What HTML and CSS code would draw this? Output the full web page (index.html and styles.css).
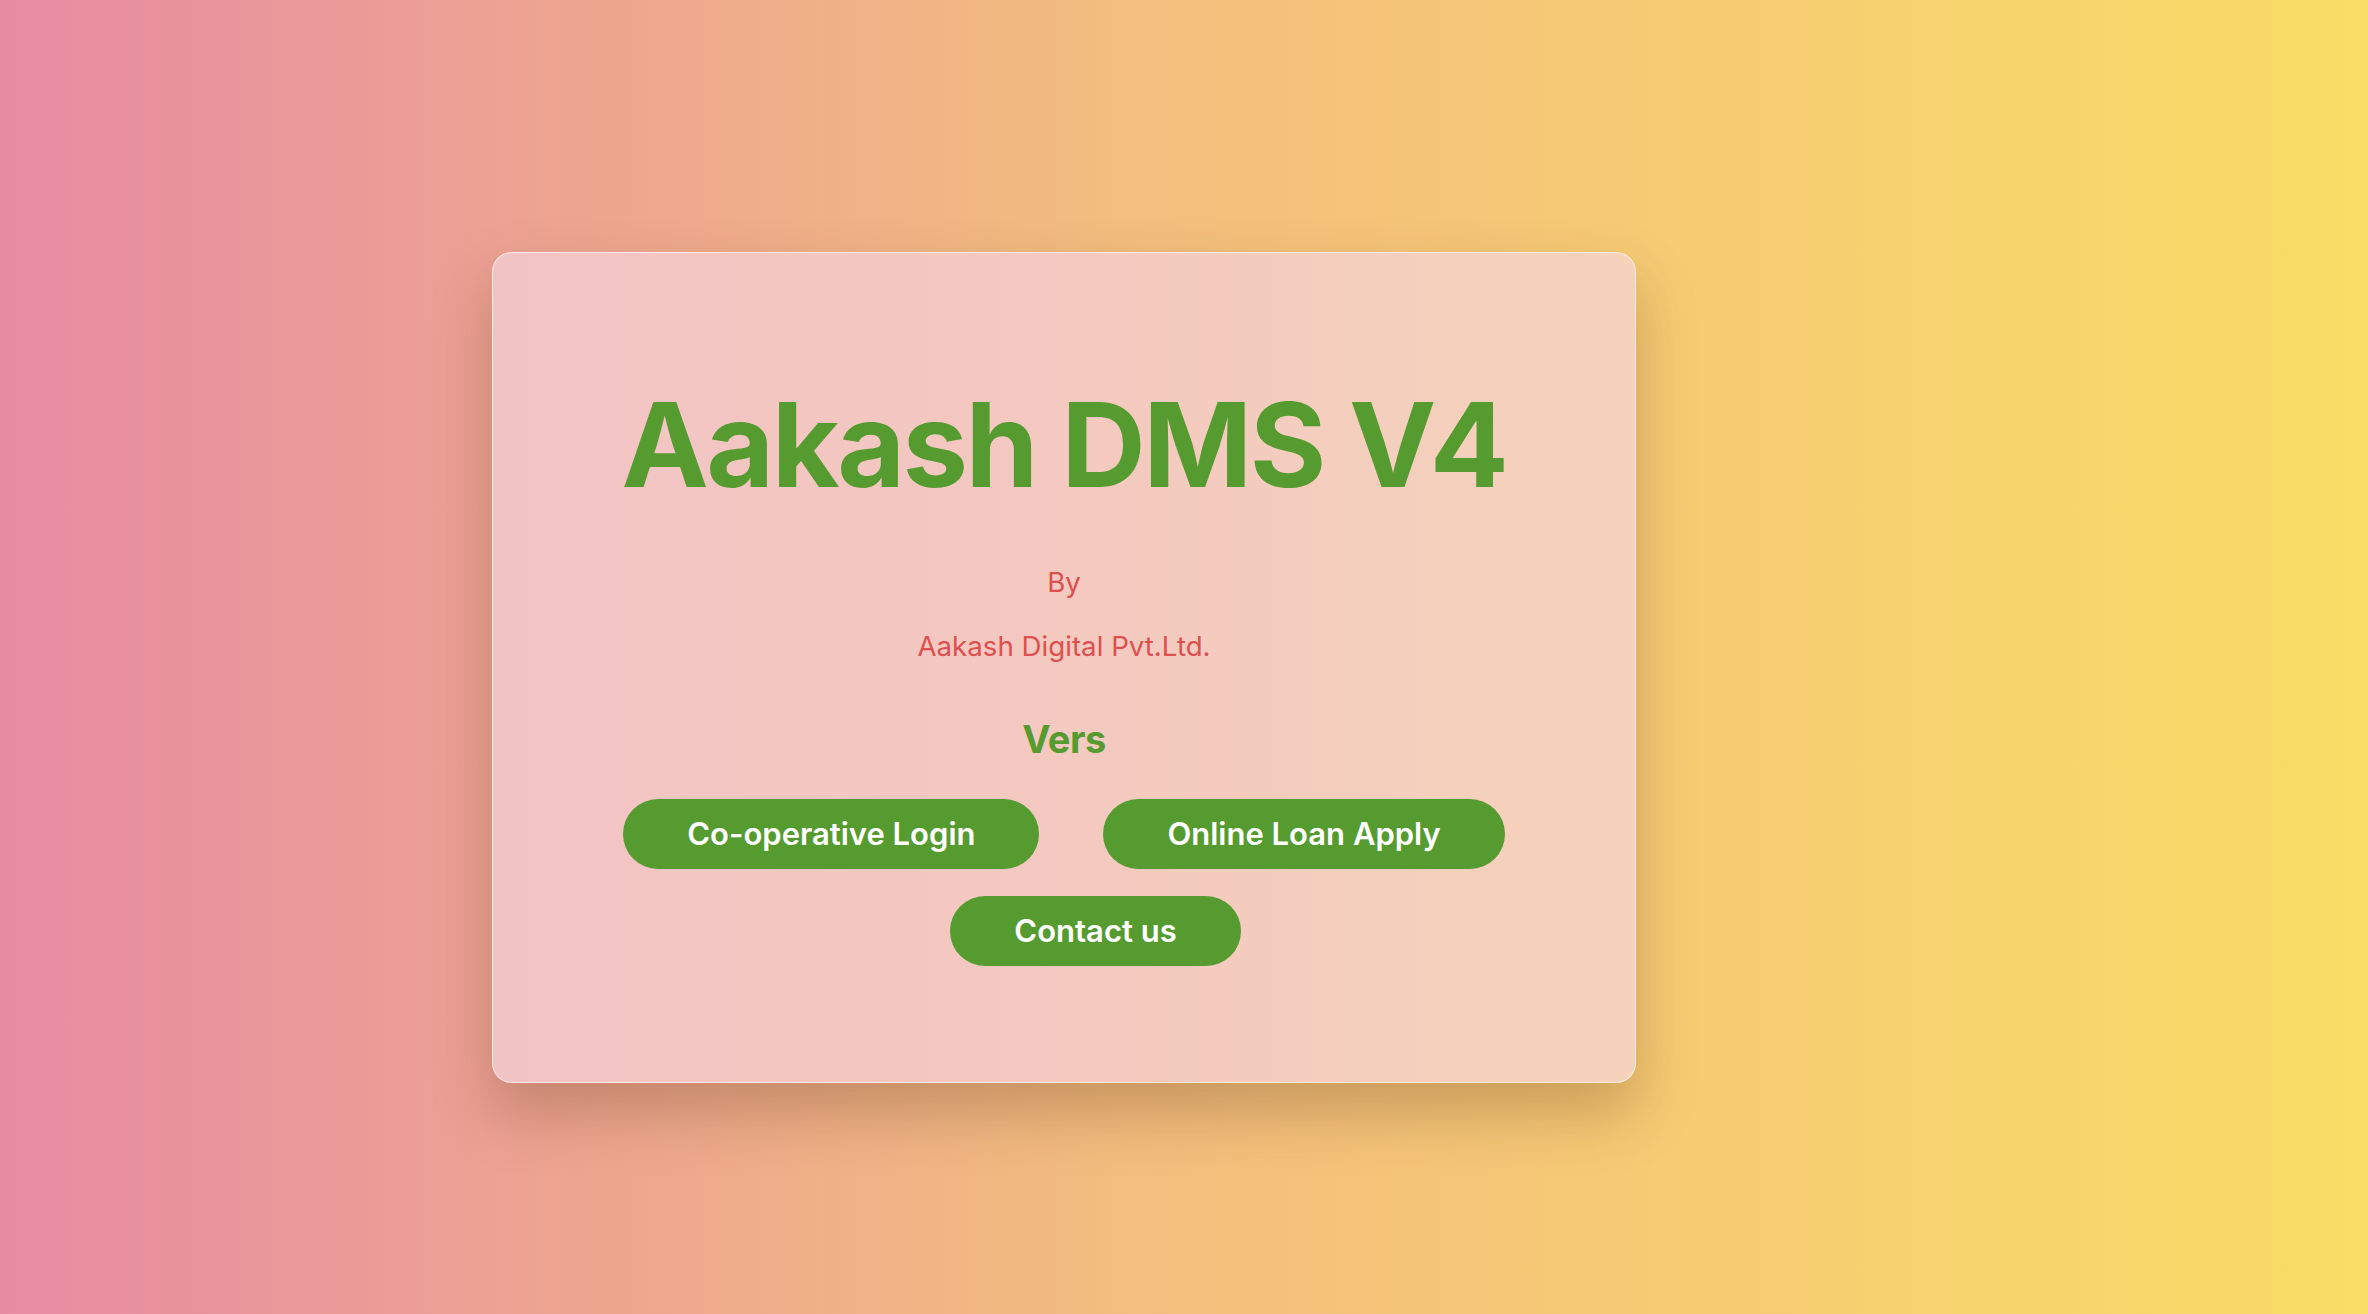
FILE: index.html
```html
<!DOCTYPE html>
<html lang="en">
<head>
<meta charset="utf-8">
<title>Aakash DMS V4</title>
<link rel="stylesheet" href="styles.css">
</head>
<body>
<main class="page">
  <section class="card">
    <h1 class="title">Aakash DMS V4</h1>
    <p class="by">By</p>
    <p class="company">Aakash Digital Pvt.Ltd.</p>
    <h2 class="version">Vers</h2>
    <div class="actions">
      <a class="btn" href="#">Co-operative Login</a>
      <a class="btn" href="#">Online Loan Apply</a>
    </div>
    <div class="actions actions-second">
      <a class="btn btn-contact" href="#">Contact us</a>
    </div>
  </section>
</main>
</body>
</html>
```
FILE: styles.css
```css
html, body {
  margin: 0;
  padding: 0;
}

body {
  min-height: 100vh;
  background: linear-gradient(to right, #e78ba3 0%, #f3bd7e 47%, #f9dd66 100%);
  font-family: Inter, "Noto Sans", "Liberation Sans", sans-serif;
  overflow: hidden;
}

.page {
  padding: 252px 0 0 492px;
}

.card {
  box-sizing: border-box;
  width: 1144px;
  height: 831px;
  padding: 133px 0 0;
  border: 1.5px solid rgba(255, 255, 255, 0.6);
  border-radius: 20px;
  background: linear-gradient(to right, #f2c3c4 0%, #f4c9c0 50%, #f5d3bb 100%);
  box-shadow: 0 30px 60px rgba(90, 50, 20, 0.28);
  text-align: center;
}

.title {
  margin: 0;
  font-size: 117px;
  line-height: 117px;
  font-weight: 700;
  letter-spacing: -2.5px;
  color: #569b2f;
}

.by,
.company {
  margin: 0;
  font-size: 27.7px;
  line-height: 27px;
  font-weight: 400;
  color: #dd5050;
}

.by {
  margin-top: 66px;
}

.company {
  margin-top: 37px;
}

.version {
  margin: 60px 0 0;
  font-size: 38px;
  line-height: 38px;
  font-weight: 700;
  color: #569b2f;
  letter-spacing: -0.5px;
}

.actions {
  display: flex;
  justify-content: center;
  gap: 64px;
  margin-top: 41px;
}

.actions-second {
  margin-top: 27px;
}

.btn {
  display: block;
  padding: 20px 64px;
  font-size: 31px;
  line-height: 30px;
  font-weight: 600;
  color: #ffffff;
  text-decoration: none;
  background: #569b2f;
  border-radius: 35px;
}

.btn-contact {
  margin-left: 63px;
}
```
